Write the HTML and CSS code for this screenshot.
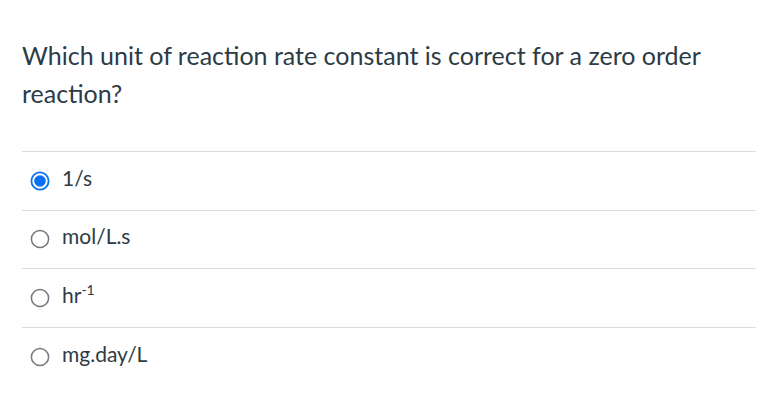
FILE: index.html
```html
<!DOCTYPE html>
<html>
<head>
<meta charset="utf-8">
<link rel="stylesheet" href="styles.css">
</head>
<body>
<div class="question">
  <p class="prompt">Which unit of reaction rate constant is correct for a zero order reaction?</p>
  <ul class="answers">
    <li class="answer">
      <svg class="radio" width="20" height="20" viewBox="0 0 20 20"><circle cx="10" cy="10" r="8.6" fill="#fff" stroke="#0770f0" stroke-width="1.8"/><circle cx="10" cy="10" r="5.8" fill="#0b6ff5"/></svg>
      <span class="label">1/s</span>
    </li>
    <li class="answer">
      <svg class="radio" width="20" height="20" viewBox="0 0 20 20"><circle cx="10" cy="10" r="8.6" fill="#fff" stroke="#777" stroke-width="1.5"/></svg>
      <span class="label">mol/L.s</span>
    </li>
    <li class="answer">
      <svg class="radio" width="20" height="20" viewBox="0 0 20 20"><circle cx="10" cy="10" r="8.6" fill="#fff" stroke="#777" stroke-width="1.5"/></svg>
      <span class="label">hr<sup>-1</sup></span>
    </li>
    <li class="answer last">
      <svg class="radio" width="20" height="20" viewBox="0 0 20 20"><circle cx="10" cy="10" r="8.6" fill="#fff" stroke="#777" stroke-width="1.5"/></svg>
      <span class="label">mg.day/L</span>
    </li>
  </ul>
</div>
</body>
</html>
```

FILE: styles.css
```css
html, body {
  margin: 0;
  padding: 0;
  background: #fff;
}
body {
  font-family: Lato, "Noto Sans", sans-serif;
  color: #2d3b45;
}
.question {
  padding: 36px 6px 0 22px;
}
.prompt {
  margin: 0;
  font-size: 25px;
  line-height: 38px;
  width: 720px;
}
.answers {
  list-style: none;
  margin: 39px 0 0 0;
  padding: 0;
}
.answer {
  display: flex;
  align-items: center;
  gap: 12px;
  height: 57.67px;
  border-top: 1px solid #dcdcdc;
  padding-left: 8px;
  font-size: 21px;
}
.radio {
  flex: none;
}
.label {
  line-height: 24px;
  margin-top: -6px;
}
sup {
  font-size: 14px;
  line-height: 0;
  vertical-align: 8px;
}
```
